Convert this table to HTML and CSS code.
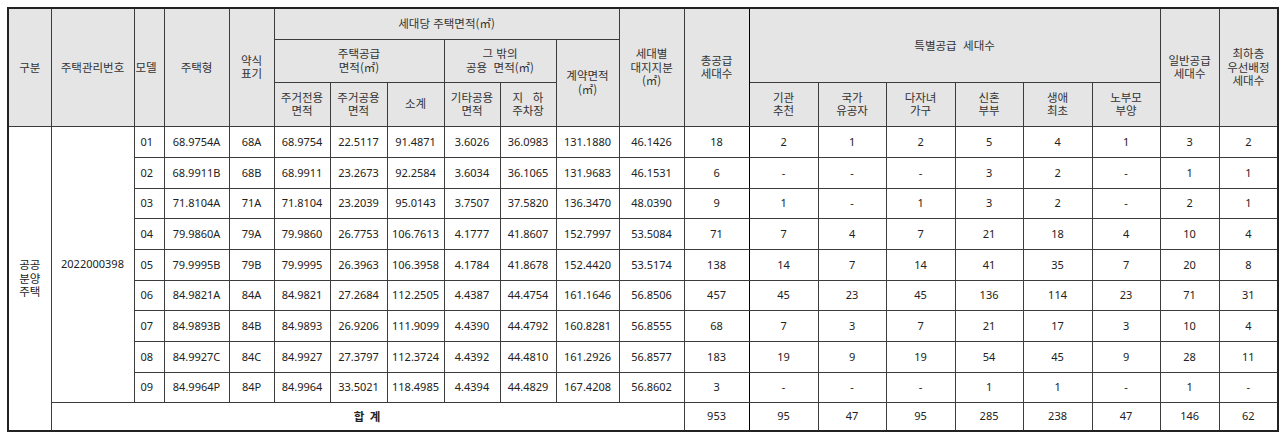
FILE: index.html
```html
<!DOCTYPE html>
<html lang="ko">
<head>
<meta charset="utf-8">
<link rel="stylesheet" href="styles.css">
</head>
<body>
<table class="supply">
  <colgroup>
    <col class="w43"><col class="w83"><col class="w30"><col class="w65"><col class="w45">
    <col class="w56"><col class="w57"><col class="w57"><col class="w56"><col class="w56">
    <col class="w63"><col class="w65"><col class="w65">
    <col class="w69"><col class="w68"><col class="w69"><col class="w68"><col class="w69"><col class="w68">
    <col class="w59"><col class="w59">
  </colgroup>
  <thead>
    <tr class="h1">
      <th rowspan="3">구분</th>
      <th rowspan="3">주택관리번호</th>
      <th rowspan="3" class="tight">모델</th>
      <th rowspan="3">주택형</th>
      <th rowspan="3">약식<br>표기</th>
      <th colspan="6">세대당 주택면적(㎡)</th>
      <th rowspan="3">세대별<br>대지지분<br>(㎡)</th>
      <th rowspan="3" class="strong-r">총공급<br>세대수</th>
      <th colspan="6" rowspan="2">특별공급&nbsp; 세대수</th>
      <th rowspan="3">일반공급<br>세대수</th>
      <th rowspan="3">최하층<br>우선배정<br>세대수</th>
    </tr>
    <tr class="h2">
      <th colspan="3">주택공급<br>면적(㎡)</th>
      <th colspan="2">그 밖의<br>공용&nbsp; 면적(㎡)</th>
      <th rowspan="2">계약면적<br>(㎡)</th>
    </tr>
    <tr class="h3">
      <th>주거전용<br>면적</th>
      <th>주거공용<br>면적</th>
      <th>소계</th>
      <th>기타공용<br>면적</th>
      <th>지&nbsp;&nbsp; 하<br>주차장</th>
      <th>기관<br>추천</th>
      <th>국가<br>유공자</th>
      <th>다자녀<br>가구</th>
      <th>신혼<br>부부</th>
      <th>생애<br>최초</th>
      <th>노부모<br>부양</th>
    </tr>
  </thead>
  <tbody>
    <tr class="r31">
      <td rowspan="10" class="kr">공공<br>분양<br>주택</td>
      <td rowspan="9">2022000398</td>
      <td class="left">01</td><td>68.9754A</td><td>68A</td><td>68.9754</td><td>22.5117</td><td>91.4871</td><td>3.6026</td><td>36.0983</td><td>131.1880</td><td>46.1426</td><td class="strong-r">18</td><td>2</td><td>1</td><td>2</td><td>5</td><td>4</td><td>1</td><td>3</td><td>2</td>
    </tr>
    <tr class="r31">
      <td class="left">02</td><td>68.9911B</td><td>68B</td><td>68.9911</td><td>23.2673</td><td>92.2584</td><td>3.6034</td><td>36.1065</td><td>131.9683</td><td>46.1531</td><td class="strong-r">6</td><td>-</td><td>-</td><td>-</td><td>3</td><td>2</td><td>-</td><td>1</td><td>1</td>
    </tr>
    <tr class="r30">
      <td class="left">03</td><td>71.8104A</td><td>71A</td><td>71.8104</td><td>23.2039</td><td>95.0143</td><td>3.7507</td><td>37.5820</td><td>136.3470</td><td>48.0390</td><td class="strong-r">9</td><td>1</td><td>-</td><td>1</td><td>3</td><td>2</td><td>-</td><td>2</td><td>1</td>
    </tr>
    <tr class="r31">
      <td class="left">04</td><td>79.9860A</td><td>79A</td><td>79.9860</td><td>26.7753</td><td>106.7613</td><td>4.1777</td><td>41.8607</td><td>152.7997</td><td>53.5084</td><td class="strong-r">71</td><td>7</td><td>4</td><td>7</td><td>21</td><td>18</td><td>4</td><td>10</td><td>4</td>
    </tr>
    <tr class="r31">
      <td class="left">05</td><td>79.9995B</td><td>79B</td><td>79.9995</td><td>26.3963</td><td>106.3958</td><td>4.1784</td><td>41.8678</td><td>152.4420</td><td>53.5174</td><td class="strong-r">138</td><td>14</td><td>7</td><td>14</td><td>41</td><td>35</td><td>7</td><td>20</td><td>8</td>
    </tr>
    <tr class="r30">
      <td class="left">06</td><td>84.9821A</td><td>84A</td><td>84.9821</td><td>27.2684</td><td>112.2505</td><td>4.4387</td><td>44.4754</td><td>161.1646</td><td>56.8506</td><td class="strong-r">457</td><td>45</td><td>23</td><td>45</td><td>136</td><td>114</td><td>23</td><td>71</td><td>31</td>
    </tr>
    <tr class="r31">
      <td class="left">07</td><td>84.9893B</td><td>84B</td><td>84.9893</td><td>26.9206</td><td>111.9099</td><td>4.4390</td><td>44.4792</td><td>160.8281</td><td>56.8555</td><td class="strong-r">68</td><td>7</td><td>3</td><td>7</td><td>21</td><td>17</td><td>3</td><td>10</td><td>4</td>
    </tr>
    <tr class="r31">
      <td class="left">08</td><td>84.9927C</td><td>84C</td><td>84.9927</td><td>27.3797</td><td>112.3724</td><td>4.4392</td><td>44.4810</td><td>161.2926</td><td>56.8577</td><td class="strong-r">183</td><td>19</td><td>9</td><td>19</td><td>54</td><td>45</td><td>9</td><td>28</td><td>11</td>
    </tr>
    <tr class="r30">
      <td class="left">09</td><td>84.9964P</td><td>84P</td><td>84.9964</td><td>33.5021</td><td>118.4985</td><td>4.4394</td><td>44.4829</td><td>167.4208</td><td>56.8602</td><td class="strong-r">3</td><td>-</td><td>-</td><td>-</td><td>1</td><td>1</td><td>-</td><td>1</td><td>-</td>
    </tr>
    <tr class="r29">
      <td colspan="11" class="sum">합 계</td>
      <td class="strong-r">953</td><td>95</td><td>47</td><td>95</td><td>285</td><td>238</td><td>47</td><td>146</td><td>62</td>
    </tr>
  </tbody>
</table>
</body>
</html>
```

FILE: styles.css
```css
html, body {
  margin: 0;
  padding: 0;
  background: #ffffff;
}
body {
  padding: 7px 0 0 7px;
  font-family: "Noto Sans", "Noto Sans CJK KR", sans-serif;
  font-size: 11px;
  color: #222;
}
.supply {
  border-collapse: collapse;
  table-layout: fixed;
  width: 1271px;
  border: 2px solid #222;
}
.supply th,
.supply td {
  border: 1px solid #3c3c3c;
  padding: 0;
  text-align: center;
  vertical-align: middle;
  line-height: 14px;
  overflow: hidden;
  white-space: nowrap;
}
.supply th {
  background: #e5e5e5;
  font-weight: normal;
  color: #333;
  font-size: 11.5px;
  line-height: 13.5px;
  font-family: "Noto Sans CJK KR", "Noto Sans", sans-serif;
}
.supply td {
  background: #fff;
}
.supply td.kr {
  font-family: "Noto Sans CJK KR", "Noto Sans", sans-serif;
  font-size: 11.5px;
  line-height: 13.5px;
}
.supply .tight { text-align: left; padding-left: 1px; }
.supply td.left { text-align: left; padding-left: 6px; }
.supply .strong-r { border-right-color: #000; }
.supply td.sum {
  font-weight: bold;
  font-size: 11.5px;
  font-family: "Noto Sans CJK KR", "Noto Sans", sans-serif;
  letter-spacing: 1px;
}
.h1 { height: 31px; }
.h2 { height: 43px; }
.h3 { height: 44px; }
.r31 { height: 31px; }
.r30 { height: 30px; }
.r29 { height: 29px; }

.w30 { width: 30px; }
.w43 { width: 43px; }
.w45 { width: 45px; }
.w56 { width: 56px; }
.w57 { width: 57px; }
.w59 { width: 59px; }
.w63 { width: 63px; }
.w65 { width: 65px; }
.w68 { width: 68px; }
.w69 { width: 69px; }
.w83 { width: 83px; }
```
